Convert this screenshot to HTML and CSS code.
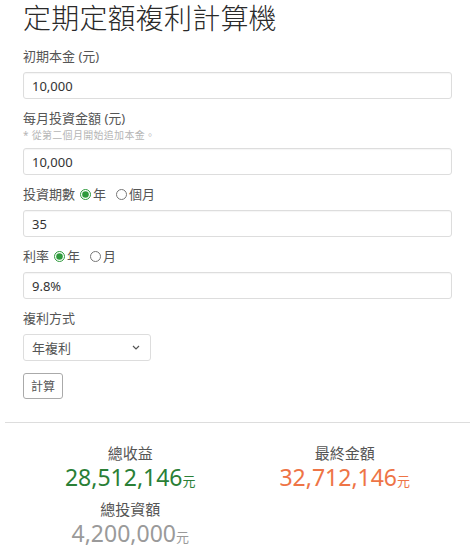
FILE: index.html
```html
<!DOCTYPE html>
<html lang="zh-Hant">
<head>
    <meta charset="UTF-8">
    <meta name="viewport" content="width=device-width, initial-scale=1.0">
    <title>定期定額複利計算機</title>
    <link rel="stylesheet" href="styles.css">
</head>
<body>
    <div class="container">
        <h1>定期定額複利計算機</h1>

        <div class="group">
            <label class="label" for="principal">初期本金 (元)</label>
            <input type="text" id="principal" class="field" value="10,000">
        </div>

        <div class="group">
            <label class="label label-tight" for="monthly">每月投資金額 (元)</label>
            <div class="hint">* 從第二個月開始追加本金。</div>
            <input type="text" id="monthly" class="field" value="10,000">
        </div>

        <div class="group">
            <div class="label radio-row">
                <span>投資期數</span>
                <label class="radio"><input type="radio" name="period" checked>年</label>
                <label class="radio"><input type="radio" name="period">個月</label>
            </div>
            <input type="text" class="field" value="35">
        </div>

        <div class="group">
            <div class="label radio-row">
                <span>利率</span>
                <label class="radio"><input type="radio" name="rate" checked>年</label>
                <label class="radio"><input type="radio" name="rate">月</label>
            </div>
            <input type="text" class="field" value="9.8%">
        </div>

        <div class="group">
            <label class="label" for="compound">複利方式</label>
            <div class="select-wrap">
                <select id="compound" class="select">
                    <option>年複利</option>
                    <option>月複利</option>
                </select>
                <svg class="chevron" width="8" height="5" viewBox="0 0 8 5">
                    <path d="M1 1l3 3 3-3" fill="none" stroke="#555" stroke-width="1.2"/>
                </svg>
            </div>
        </div>

        <button class="btn">計算</button>

        <hr class="divider">

        <div class="results">
            <div class="result">
                <div class="result-title">總收益</div>
                <div class="result-value green">28,512,146<small>元</small></div>
            </div>
            <div class="result">
                <div class="result-title">最終金額</div>
                <div class="result-value orange">32,712,146<small>元</small></div>
            </div>
            <div class="result">
                <div class="result-title">總投資額</div>
                <div class="result-value gray">4,200,000<small>元</small></div>
            </div>
        </div>
    </div>
</body>
</html>
```

FILE: styles.css
```css
body {
    margin: 0;
    padding: 0;
    font-family: "Noto Sans", "Noto Sans CJK TC", sans-serif;
    color: #333;
    background: #fff;
}
.container {
    padding: 0 22px 0 23px;
}
h1 {
    margin: 0 0 13px;
    font-family: "Noto Sans CJK TC", sans-serif;
    font-size: 28px;
    line-height: 34px;
    font-weight: 300;
    color: #2a2a2a;
    letter-spacing: 0.2px;
}
.group {
    margin-bottom: 10px;
}
.label {
    display: block;
    font-size: 13px;
    line-height: 18px;
    color: #555;
    margin-bottom: 7px;
}
.label-tight {
    margin-bottom: 0;
}
.hint {
    font-size: 10px;
    line-height: 12px;
    color: #b5b5b5;
    letter-spacing: 0.3px;
    margin: 2px 0 7px;
}
.field {
    display: block;
    box-sizing: border-box;
    width: 100%;
    height: 27px;
    padding: 0 8px;
    border: 1px solid #ddd;
    border-radius: 3px;
    font-family: inherit;
    font-size: 13px;
    color: #333;
    box-shadow: inset 0 1px 1px rgba(0, 0, 0, 0.04);
}
.radio-row {
    display: flex;
    align-items: center;
    gap: 5px;
}
.radio {
    display: flex;
    align-items: center;
    gap: 2px;
    margin-right: 5px;
}
.radio input {
    width: 11px;
    height: 11px;
    margin: 0;
    accent-color: #2e9a3c;
}
.select-wrap {
    position: relative;
    width: 128px;
}
.select {
    display: block;
    box-sizing: border-box;
    width: 100%;
    height: 27px;
    padding: 0 8px;
    border: 1px solid #ddd;
    border-radius: 3px;
    background: #fff;
    font-family: inherit;
    font-size: 13px;
    color: #555;
    appearance: none;
}
.chevron {
    position: absolute;
    right: 11px;
    top: 11px;
    pointer-events: none;
}
.btn {
    display: block;
    height: 26px;
    padding: 0 7px;
    margin-top: 12px;
    border: 1px solid #aaa;
    border-radius: 3px;
    background: #fff;
    font-family: inherit;
    font-size: 12px;
    color: #555;
    cursor: pointer;
}
.divider {
    margin: 23px -18px 0 -18px;
    border: 0;
    border-top: 1px solid #ddd;
}
.results {
    display: grid;
    grid-template-columns: 1fr 1fr;
    row-gap: 4px;
    padding-top: 20px;
    text-align: center;
}
.result-title {
    font-size: 15px;
    line-height: 20px;
    color: #555;
}
.result-value {
    font-size: 23px;
    line-height: 28px;
}
.result-value small {
    font-size: 13px;
}
.green {
    color: #2a7f36;
}
.orange {
    color: #ee7446;
}
.gray {
    color: #9a9a9a;
}
```
